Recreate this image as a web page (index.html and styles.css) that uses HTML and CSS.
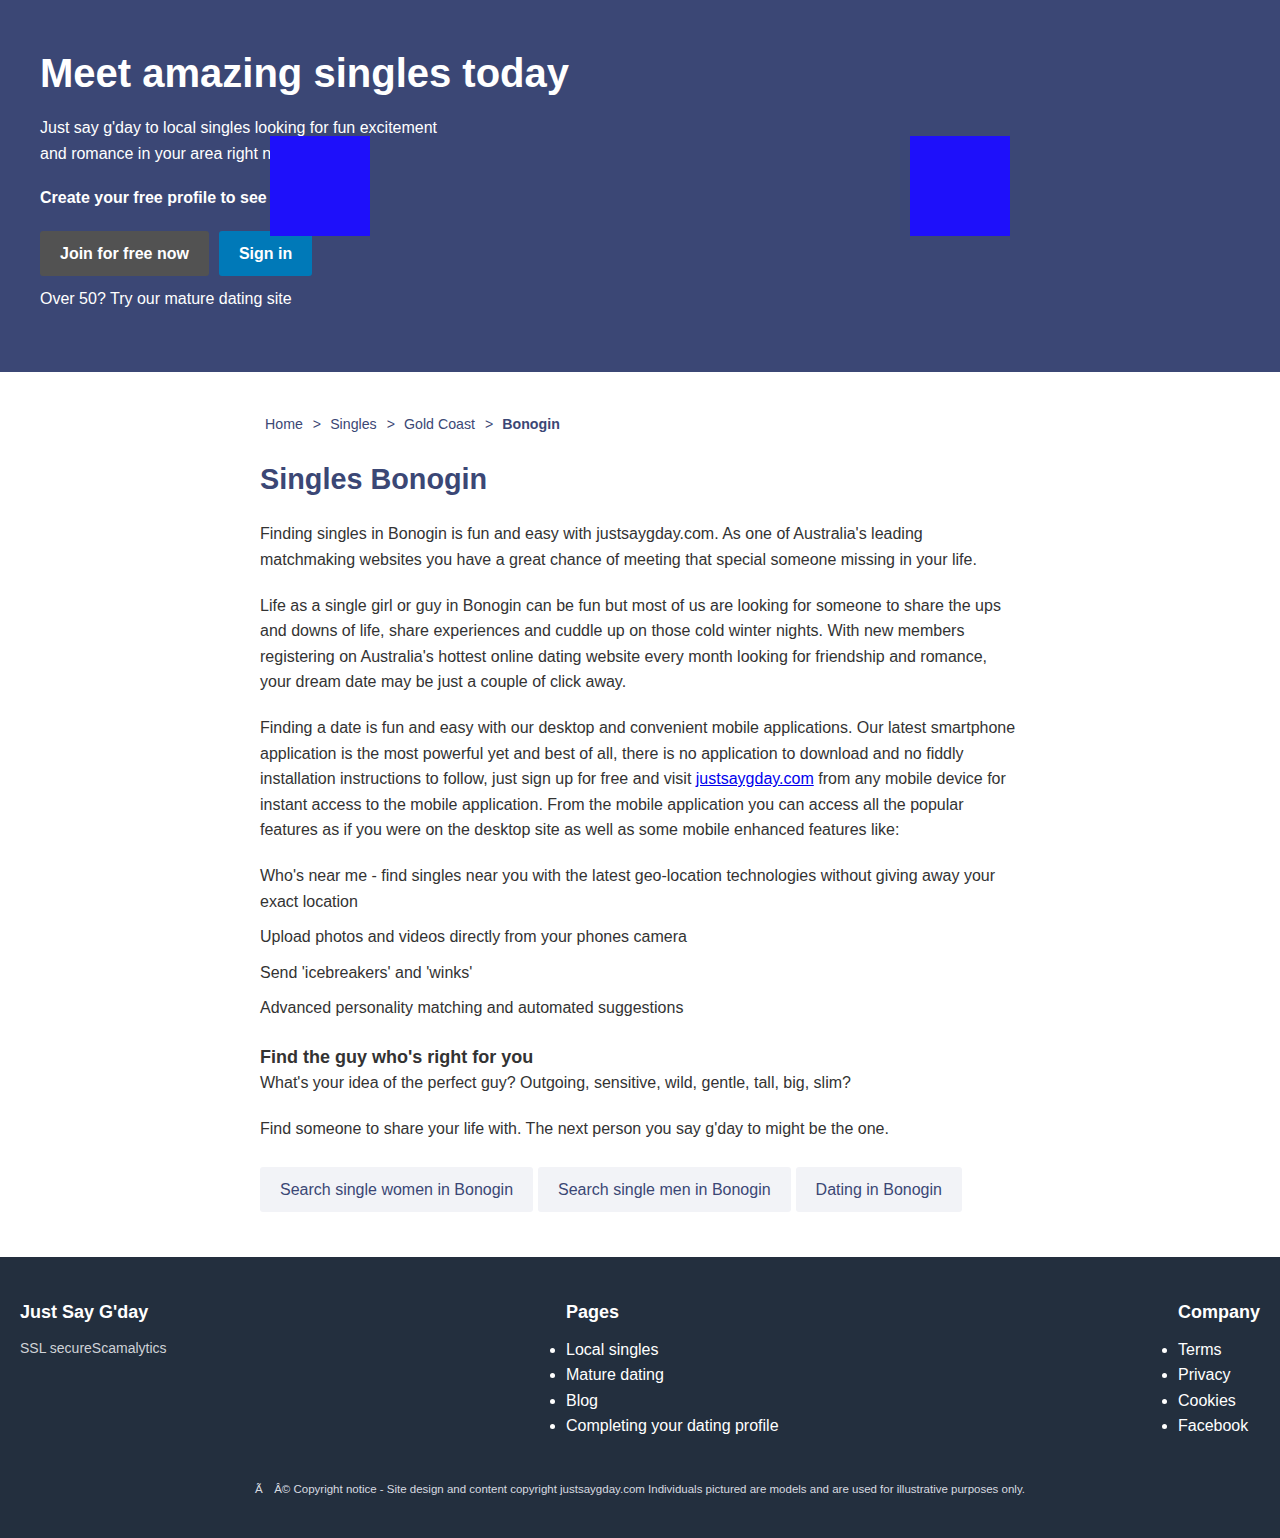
FILE: index.html
```html
<!DOCTYPE html>
<html lang="en">
<head>
<meta charset="utf-8">
<title>Singles Bonogin</title>
<link rel="stylesheet" href="styles.css">
</head>
<body>
<header class="hero">
  <h1 class="hero-title">Meet amazing singles today</h1>
  <p class="hero-text">Just say g'day to local singles looking for fun excitement and romance in your area right now</p>
  <p class="hero-cta">Create your free profile to see local singles</p>
  <div class="hero-buttons">
    <a class="btn btn-join" href="#">Join for free now</a>
    <a class="btn btn-sign" href="#">Sign in</a>
  </div>
  <p class="hero-mature">Over 50? Try our mature dating site</p>
  <div class="hero-img hero-img-a"></div>
  <div class="hero-img hero-img-b"></div>
</header>

<main class="content">
  <nav class="crumbs">
    <a href="#">Home</a><span class="sep">&gt;</span><a href="#">Singles</a><span class="sep">&gt;</span><a href="#">Gold Coast</a><span class="sep">&gt;</span><strong>Bonogin</strong>
  </nav>
  <h1 class="page-title">Singles Bonogin</h1>
  <p>Finding singles in Bonogin is fun and easy with justsaygday.com. As one of Australia's leading matchmaking websites you have a great chance of meeting that special someone missing in your life.</p>
  <p>Life as a single girl or guy in Bonogin can be fun but most of us are looking for someone to share the ups and downs of life, share experiences and cuddle up on those cold winter nights. With new members registering on Australia's hottest online dating website every month looking for friendship and romance, your dream date may be just a couple of click away.</p>
  <p>Finding a date is fun and easy with our desktop and convenient mobile applications. Our latest smartphone application is the most powerful yet and best of all, there is no application to download and no fiddly installation instructions to follow, just sign up for free and visit <a class="inline-link" href="#">justsaygday.com</a> from any mobile device for instant access to the mobile application. From the mobile application you can access all the popular features as if you were on the desktop site as well as some mobile enhanced features like:</p>
  <ul class="features">
    <li>Who's near me - find singles near you with the latest geo-location technologies without giving away your exact location</li>
    <li>Upload photos and videos directly from your phones camera</li>
    <li>Send 'icebreakers' and 'winks'</li>
    <li>Advanced personality matching and automated suggestions</li>
  </ul>
  <h3 class="sub-title">Find the guy who's right for you</h3>
  <p>What's your idea of the perfect guy? Outgoing, sensitive, wild, gentle, tall, big, slim?</p>
  <p>Find someone to share your life with. The next person you say g'day to might be the one.</p>
  <div class="search-links">
    <a class="search-btn" href="#">Search single women in Bonogin</a>
    <a class="search-btn" href="#">Search single men in Bonogin</a>
    <a class="search-btn" href="#">Dating in Bonogin</a>
  </div>
</main>

<footer class="footer">
  <div class="footer-cols">
    <div class="footer-col">
      <h3 class="footer-head">Just Say G'day</h3>
      <p class="footer-note">SSL secureScamalytics</p>
    </div>
    <div class="footer-col">
      <h3 class="footer-head">Pages</h3>
      <ul class="footer-list">
        <li><a href="#">Local singles</a></li>
        <li><a href="#">Mature dating</a></li>
        <li><a href="#">Blog</a></li>
        <li><a href="#">Completing your dating profile</a></li>
      </ul>
    </div>
    <div class="footer-col">
      <h3 class="footer-head">Company</h3>
      <ul class="footer-list">
        <li><a href="#">Terms</a></li>
        <li><a href="#">Privacy</a></li>
        <li><a href="#">Cookies</a></li>
        <li><a href="#">Facebook</a></li>
      </ul>
    </div>
  </div>
  <p class="copyright">Ã&ensp;&ensp;Â© Copyright notice - Site design and content copyright justsaygday.com Individuals pictured are models and are used for illustrative purposes only.</p>
</footer>
</body>
</html>
```

FILE: styles.css
```css
* { box-sizing: border-box; }

body {
  margin: 0;
  font-family: "Liberation Sans", Arial, sans-serif;
  font-size: 16px;
  line-height: 1.6;
  color: #333;
  background: #fff;
}

a { text-decoration: none; color: inherit; }

.hero {
  position: relative;
  background: #3b4775;
  color: #fff;
  padding: 50px 40px 41px;
}

.hero-title {
  margin: 0 0 19px;
  font-size: 40px;
  line-height: 46px;
  font-weight: bold;
}

.hero-text {
  margin: 0 0 19px;
  max-width: 410px;
}

.hero-cta {
  margin: 0 0 20px;
  font-weight: bold;
}

.hero-buttons {
  display: flex;
  gap: 10px;
  margin-bottom: 10px;
}

.btn {
  display: inline-block;
  padding: 10px 20px;
  line-height: 25px;
  font-weight: bold;
  color: #fff;
  border-radius: 3px;
}

.btn-join { background: #525252; }
.btn-sign { background: #0079b8; }

.hero-mature { margin: 0 0 20px; }

.hero-img {
  position: absolute;
  top: 136px;
  width: 100px;
  height: 100px;
  background: #1e10fa;
}
.hero-img-a { left: 270px; }
.hero-img-b { left: 910px; }

.content {
  width: 760px;
  margin: 0 auto;
  padding: 42px 0 45px;
}

.crumbs {
  padding-left: 5px;
  font-size: 14.2px;
  line-height: 20px;
  color: #3b4775;
}
.crumbs .sep { margin: 0 9px 0 10px; }
.crumbs strong { font-weight: bold; }

.page-title {
  margin: 28px 0 25px;
  font-size: 28.8px;
  line-height: 34px;
  color: #3b4775;
}

.content p { margin: 0 0 20px; }

.inline-link {
  color: #0000ee;
  text-decoration: underline;
}

.features {
  list-style: none;
  margin: 0;
  padding: 0;
}
.features li { margin-bottom: 10px; }

.sub-title {
  margin: 24px 0 0;
  font-size: 18px;
  line-height: 25.6px;
  font-weight: bold;
}

.search-links {
  display: flex;
  gap: 5px;
  margin-top: 25px;
}

.search-btn {
  padding: 10px 20px;
  line-height: 25px;
  background: #f2f3f7;
  color: #3b4775;
  border-radius: 3px;
}

.footer {
  background: #232f3e;
  color: #fff;
  padding: 44px 20px 40px;
}

.footer-cols {
  display: flex;
  justify-content: space-between;
  align-items: flex-start;
}

.footer-head {
  margin: 0 0 14px;
  font-size: 18px;
  line-height: 22px;
  font-weight: bold;
}

.footer-note {
  margin: 0;
  font-size: 14px;
  line-height: 22.4px;
  color: #d0d3d8;
}

.footer-list {
  margin: 0;
  padding: 0;
  list-style: disc outside;
}

.copyright {
  margin: 42px 0 0;
  text-align: center;
  font-size: 11.5px;
  line-height: 17px;
  color: #d8dbe0;
}
```
